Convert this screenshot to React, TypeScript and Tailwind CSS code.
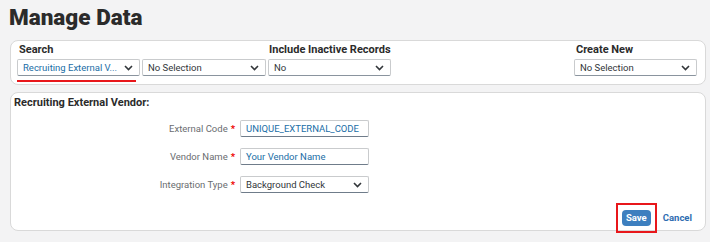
import React from "react";

function Chevron() {
  return (
    <svg width="9" height="6" viewBox="0 0 9 6" className="shrink-0">
      <path d="M1 1 L4.5 4.5 L8 1" fill="none" stroke="#32363a" strokeWidth="1.6" />
    </svg>
  );
}

function Select({ text, w, blue }: { text: string; w: string; blue?: boolean }) {
  return (
    <div
      className={`${w} h-[17px] flex items-center justify-between pl-[5px] pr-[6px] bg-white border border-[#c9cbcd] border-b-[#8a949e] rounded-[2px] text-[9.5px] leading-none ${
        blue ? "text-[#1a6ea6]" : "text-[#32363a]"
      }`}
    >
      <span className="whitespace-nowrap">{text}</span>
      <Chevron />
    </div>
  );
}

function Row({ label, children }: { label: string; children: React.ReactNode }) {
  return (
    <div className="flex items-center h-[17px]">
      <div className="w-[224px] text-right text-[9.5px] text-[#6a6d70] leading-none">
        {label}
        <span className="text-[#e00] font-bold ml-[3px]">*</span>
      </div>
      <div className="ml-[5px]">{children}</div>
    </div>
  );
}

function Input({ text }: { text: string }) {
  return (
    <div className="w-[129px] h-[17px] flex items-center pl-[5px] bg-white border border-[#c9cbcd] border-b-[#6f7c8a] rounded-[2px] text-[9.5px] leading-none text-[#1a6ea6] whitespace-nowrap">
      {text}
    </div>
  );
}

export default function App() {
  return (
    <div
      className="w-[710px] h-[242px] bg-[#f3f3f4] overflow-hidden"
      style={{ fontFamily: "Roboto, 'Liberation Sans', sans-serif" }}
    >
      <div className="pl-[9px] pt-[3px] text-[22.5px] leading-[29px] font-black text-[#2b2b2b]">
        Manage Data
      </div>

      <div className="ml-[10px] mr-[4px] mt-[8px] h-[45px] bg-white border border-[#d9d9d9] rounded-[8px] pl-[6px] pr-[8px] pt-[2px] flex">
        <div className="flex flex-col">
          <div className="text-[11px] font-bold leading-[14px] text-[#2b2b2b] pl-[2px]">Search</div>
          <div className="flex mt-[2px]">
            <div className="flex flex-col">
              <Select text="Recruiting External V..." w="w-[123px]" blue />
              <div className="mt-[4px] w-[119px] h-[2px] bg-[#e8171b]" />
            </div>
            <div className="ml-[2px]">
              <Select text="No Selection" w="w-[124px]" />
            </div>
          </div>
        </div>
        <div className="flex flex-col ml-[2px]">
          <div className="text-[11px] font-bold leading-[14px] text-[#2b2b2b] pl-[1px]">Include Inactive Records</div>
          <div className="mt-[2px]">
            <Select text="No" w="w-[123px]" />
          </div>
        </div>
        <div className="flex-1" />
        <div className="flex flex-col">
          <div className="text-[11px] font-bold leading-[14px] text-[#2b2b2b] pl-[2px]">Create New</div>
          <div className="mt-[2px]">
            <Select text="No Selection" w="w-[123px]" />
          </div>
        </div>
      </div>

      <div className="ml-[10px] mr-[4px] mt-[7px] h-[139px] bg-white border border-[#d9d9d9] rounded-[8px] flex flex-col">
        <div className="pl-[3px] pt-[3px] text-[11px] font-bold leading-[14px] text-[#2b2b2b]">
          Recruiting External Vendor:
        </div>
        <div className="mt-[10px] flex flex-col gap-[11px]">
          <Row label="External Code">
            <Input text="UNIQUE_EXTERNAL_CODE" />
          </Row>
          <Row label="Vendor Name">
            <Input text="Your Vendor Name" />
          </Row>
          <Row label="Integration Type">
            <div className="w-[129px] h-[17px] flex items-center justify-between pl-[5px] pr-[6px] bg-white border border-[#c9cbcd] border-b-[#6f7c8a] rounded-[2px] text-[9.5px] leading-none text-[#32363a]">
              <span>Background Check</span>
              <Chevron />
            </div>
          </Row>
        </div>
        <div className="mt-[10px] flex items-center justify-end pr-[13px]">
          <div className="border-2 border-[#e8171b] px-[4px] py-[5px]">
            <div className="w-[29px] h-[16px] rounded-[4px] bg-[#3d7fbf] text-white text-[9.5px] font-bold flex items-center justify-center leading-none">
              Save
            </div>
          </div>
          <div className="ml-[6px] text-[9.5px] font-bold text-[#2e6db1] leading-none">Cancel</div>
        </div>
      </div>
    </div>
  );
}
